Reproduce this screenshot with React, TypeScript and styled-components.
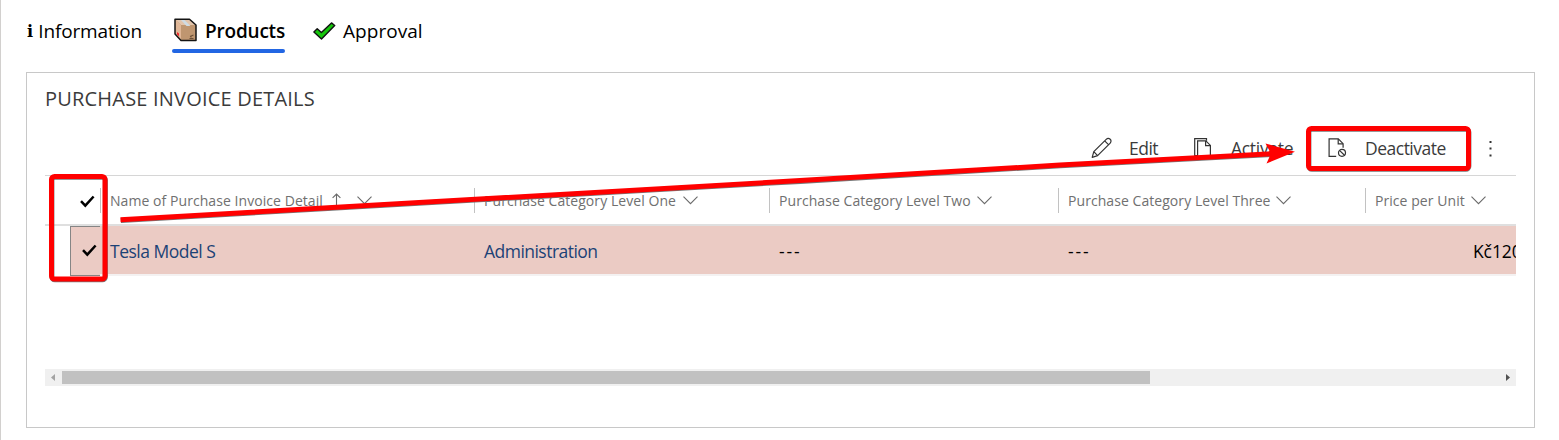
import React from 'react';
import styled, { createGlobalStyle } from 'styled-components';

const Global = createGlobalStyle`
  * { box-sizing: border-box; }
  html, body { margin: 0; background: #fff; }
  body { overflow: hidden; font-family: "Open Sans", "Noto Sans", sans-serif; }
  svg { display: block; flex: none; }
`;

const Page = styled.div`
  position: relative;
  width: 1559px;
  height: 440px;
  border-left: 1px solid #d2d0ce;
  padding-left: 25px;
  overflow: hidden;
`;

const Label = styled.span<{ $size: number; $ls?: number; $weight?: number; $color?: string }>`
  white-space: nowrap;
  line-height: 24px;
  font-size: ${(p) => p.$size}px;
  letter-spacing: ${(p) => p.$ls ?? 0}px;
  font-weight: ${(p) => p.$weight ?? 400};
  color: ${(p) => p.$color ?? '#000'};
`;

const TabList = styled.nav`
  display: flex;
  height: 72px;
  padding-top: 14px;
`;

const Tab = styled.div<{ $width: number; $gap: number }>`
  width: ${(p) => p.$width}px;
  margin-right: ${(p) => p.$gap}px;
`;

const TabContent = styled.div`
  display: flex;
  align-items: center;
  height: 35px;
  padding-bottom: 2px;
`;

const TabIcon = styled.div<{ $width: number }>`
  width: ${(p) => p.$width}px;
  padding-left: 1px;
`;

const Underline = styled.div`
  height: 4px;
  border-radius: 2px;
  background: #2266e3;
`;

const InfoGlyph = styled.span`
  display: block;
  font: bold 16px/24px "DejaVu Serif", serif;
  padding-top: 2px;
`;

const Panel = styled.section`
  width: 1509px;
  height: 356px;
  border: 1px solid #c8c8c8;
  padding: 14px 18px 0;
`;

const Title = styled.h2`
  display: flex;
  height: 36px;
  margin: 0;
`;

const Toolbar = styled.div`
  display: flex;
  justify-content: flex-end;
  height: 53px;
  padding: 11px 23px 0 0;
  border-bottom: 1px solid #d6d6d6;
`;

const Command = styled.div<{ $width: number; $drop?: number }>`
  display: flex;
  align-items: center;
  width: ${(p) => p.$width}px;
  height: 27px;
  padding-top: ${(p) => p.$drop ?? 0}px;
`;

const CommandIcon = styled.div<{ $width: number }>`
  width: ${(p) => p.$width}px;
`;

const Grid = styled.div`
  width: 1471px;
  overflow: hidden;
`;

const columns = '55px 374px 295px 289px 307px 151px';

const HeaderRow = styled.div`
  display: grid;
  grid-template-columns: ${columns};
  align-items: center;
  height: 50px;
  border-bottom: 2px solid #dfdfdf;
`;

const HeaderCell = styled.div`
  display: flex;
  align-items: center;
  height: 25px;
  margin-top: 1px;
  padding-left: 9px;
  border-left: 1px solid #c2c2c2;
`;

const HeaderLabel = styled.div<{ $width: number }>`
  display: flex;
  width: ${(p) => p.$width}px;
  padding-top: 1px;
`;

const DataRow = styled.div`
  display: grid;
  grid-template-columns: ${columns};
  height: 50px;
`;

const CheckCell = styled.div`
  display: flex;
  height: 50px;
  margin-left: 25px;
  padding: 17px 0 0 11px;
  border: 1px solid #858585;
  border-right: 0;
  background: #ebcbc4;
`;

const HeaderCheck = styled.div`
  padding: 3px 0 0 35px;
`;

const DataCell = styled.div<{ $indent?: number }>`
  display: flex;
  align-items: center;
  height: 50px;
  overflow: hidden;
  padding: 1px 0 0 ${(p) => p.$indent ?? 10}px;
  background: #ebcbc4;
  border-bottom: 2px solid #f4f1f1;
`;

const Scrollbar = styled.div`
  display: flex;
  align-items: center;
  width: 1471px;
  height: 17px;
  margin-top: 93px;
  background: #f0f0f0;
`;

const ScrollButton = styled.div<{ $inset: number }>`
  width: 17px;
  padding-left: ${(p) => p.$inset}px;
`;

const Track = styled.div`
  flex: 1;
`;

const Thumb = styled.div`
  width: 1088px;
  height: 13px;
  background: #c1c1c1;
`;

const Annotations = styled.svg`
  position: absolute;
  left: -1px;
  top: 0;
`;

const BoxIcon = () => (
  <svg width="25" height="25" viewBox="0 0 25 25">
    <path d="M2 1.2h14.5L23 7v15.5H8L2 16z" fill="#bf9670" />
    <path d="M2 1.2h14.5L23 7H8z" fill="#e2c4ab" />
    <path d="M2 1.2L8 7v15.5L2 16z" fill="#e0b797" />
    <path d="M7.5 1.5h3.5L17.5 8h-4z" fill="#cfdbe2" />
    <path d="M4 14l2 1.6v2.6L4 16.5z" fill="#f2232b" />
    <path d="M20.5 17l-3.5 1.5M16.5 20.5h4M18 18v1.5" stroke="#6b4f36" strokeWidth="1.1" fill="none" />
    <path d="M2 1.2h14.5L23 7v15.5H8L2 16z" fill="none" stroke="#141414" strokeWidth="1.5" strokeLinejoin="round" />
  </svg>
);

const GreenCheck = () => (
  <svg width="23" height="18" viewBox="0 0 23 18">
    <path d="M.9 10L4.2 6.8l4.2 3.8L18.5.9l3.2 2.6L8.5 16.9z" fill="#16c60c" stroke="#111" strokeWidth="1.4" strokeLinejoin="round" />
  </svg>
);

const PencilIcon = () => (
  <svg width="22" height="22" viewBox="0 0 22 22" fill="none" stroke="#333" strokeWidth="1.2" strokeLinejoin="round">
    <path d="M1.2 20.3l1.6-5.6L15.2 2.3c1.1-1.1 2.9-1.1 4-.1s1.1 2.8 0 3.9L6.6 18.7zM2.8 14.7l3.8 4M13.7 3.8l4 4" />
  </svg>
);

const ActivateIcon = () => (
  <svg width="18" height="20" viewBox="0 0 18 20" fill="none" stroke="#333" strokeWidth="1.2">
    <path d="M3.6 17.6H.7V.7h11.8v2" />
    <path d="M3.6 18.8V2.8h8.2l4.6 4.6v11.4z" />
    <path d="M11.6 3v4.6h4.6" />
  </svg>
);

const DeactivateIcon = () => (
  <svg width="19" height="20" viewBox="0 0 19 20" fill="none" stroke="#333" strokeWidth="1.2">
    <path d="M8.2 18.3H1.1V.9h9.2l4.8 4.8v4" />
    <path d="M10.2 1v4.8H15" />
    <circle cx="14" cy="14.8" r="3.5" />
    <path d="M11.5 12.4l5 4.8" />
  </svg>
);

const MoreIcon = () => (
  <svg width="3" height="17" viewBox="0 0 3 17" fill="#333">
    <rect x=".5" y="1" width="2" height="2" />
    <rect x=".5" y="7.5" width="2" height="2" />
    <rect x=".5" y="14.5" width="2" height="2" />
  </svg>
);

const Chevron = () => (
  <svg width="15" height="9" viewBox="0 0 15 9" fill="none" stroke="#6a6a6a" strokeWidth="1.1">
    <path d="M.5.7l7 7 7-7" />
  </svg>
);

const SortUp = () => (
  <svg width="25" height="16" viewBox="0 0 25 16" fill="none" stroke="#6a6a6a" strokeWidth="1.1">
    <path d="M4.5 13.5V1M.6 4.9L4.5 1l3.9 3.9" />
  </svg>
);

const Tick = () => (
  <svg width="15" height="13" viewBox="0 0 15 13" fill="none" stroke="#000" strokeWidth="2.5">
    <path d="M1 6.2l4.3 4.5L13.6 1.5" />
  </svg>
);

const headers = [
  { text: 'Name of Purchase Invoice Detail', width: 222, sorted: true },
  { text: 'Purchase Category Level One', width: 199 },
  { text: 'Purchase Category Level Two', width: 198 },
  { text: 'Purchase Category Level Three', width: 208 },
  { text: 'Price per Unit', width: 96 },
];

export default function App() {
  return (
    <>
      <Global />
      <Page>
        <TabList>
          <Tab $width={116} $gap={30}>
            <TabContent>
              <TabIcon $width={13}><InfoGlyph>i</InfoGlyph></TabIcon>
              <Label $size={19} $ls={-0.15}>Information</Label>
            </TabContent>
          </Tab>
          <Tab $width={113} $gap={27}>
            <TabContent>
              <TabIcon $width={33}><BoxIcon /></TabIcon>
              <Label $size={19} $ls={-0.2} $weight={600}>Products</Label>
            </TabContent>
            <Underline />
          </Tab>
          <Tab $width={112} $gap={0}>
            <TabContent>
              <TabIcon $width={31}><GreenCheck /></TabIcon>
              <Label $size={19} $ls={0.05}>Approval</Label>
            </TabContent>
          </Tab>
        </TabList>

        <Panel>
          <Title>
            <Label $size={20} $ls={0.2} $color="#3b3b3b">PURCHASE INVOICE DETAILS</Label>
          </Title>
          <Toolbar>
            <Command $width={103}>
              <CommandIcon $width={38}><PencilIcon /></CommandIcon>
              <Label $size={17.5} $ls={-0.5} $color="#3b3b3b">Edit</Label>
            </Command>
            <Command $width={134}>
              <CommandIcon $width={37}><ActivateIcon /></CommandIcon>
              <Label $size={17.5} $ls={-0.3} $color="#3b3b3b">Activate</Label>
            </Command>
            <Command $width={161} $drop={1}>
              <CommandIcon $width={37}><DeactivateIcon /></CommandIcon>
              <Label $size={17.5} $ls={-0.5} $color="#3b3b3b">Deactivate</Label>
            </Command>
            <Command $width={4} $drop={1}><MoreIcon /></Command>
          </Toolbar>

          <Grid>
            <HeaderRow>
              <HeaderCheck><Tick /></HeaderCheck>
              {headers.map((h) => (
                <HeaderCell key={h.text}>
                  <HeaderLabel $width={h.width}>
                    <Label $size={14} $ls={0.06} $color="#707070">{h.text}</Label>
                  </HeaderLabel>
                  {h.sorted && <SortUp />}
                  <Chevron />
                </HeaderCell>
              ))}
            </HeaderRow>
            <DataRow>
              <CheckCell><Tick /></CheckCell>
              <DataCell><Label $size={17.5} $ls={-0.5} $color="#1b4276">Tesla Model S</Label></DataCell>
              <DataCell><Label $size={17.5} $ls={-0.53} $color="#1b4276">Administration</Label></DataCell>
              <DataCell><Label $size={17.5} $ls={1.9}>---</Label></DataCell>
              <DataCell><Label $size={17.5} $ls={1.9}>---</Label></DataCell>
              <DataCell $indent={108}><Label $size={17.5} $ls={-0.1}>Kč120</Label></DataCell>
            </DataRow>
          </Grid>

          <Scrollbar>
            <ScrollButton $inset={6}>
              <svg width="4" height="7" viewBox="0 0 4 7"><path d="M4 0v7L0 3.5z" fill="#a3a3a3" /></svg>
            </ScrollButton>
            <Track><Thumb /></Track>
            <ScrollButton $inset={7}>
              <svg width="4" height="7" viewBox="0 0 4 7"><path d="M0 0v7l4-3.5z" fill="#505050" /></svg>
            </ScrollButton>
          </Scrollbar>
        </Panel>

        <Annotations width="1559" height="440" viewBox="0 0 1559 440" fill="none">
          <g stroke="#777" strokeWidth="5" transform="translate(.4 .8)">
            <rect x="51.5" y="176.5" width="53.5" height="102.5" rx="3" />
            <rect x="1308.5" y="128.5" width="160" height="40" rx="3" />
            <path d="M120.5 219.7L800 180.6l260-15.6 212-11.2" />
          </g>
          <g stroke="#f00" strokeWidth="5">
            <rect x="51.5" y="176.5" width="53.5" height="102.5" rx="3" />
            <rect x="1308.5" y="128.5" width="160" height="40" rx="3" />
            <path d="M120.5 219.7L800 180.6l260-15.6 212-11.2" />
          </g>
          <path d="M1295 151.8l-29.5-8.3 5.5 10-4.5 10z" fill="#f00" />
        </Annotations>
      </Page>
    </>
  );
}
